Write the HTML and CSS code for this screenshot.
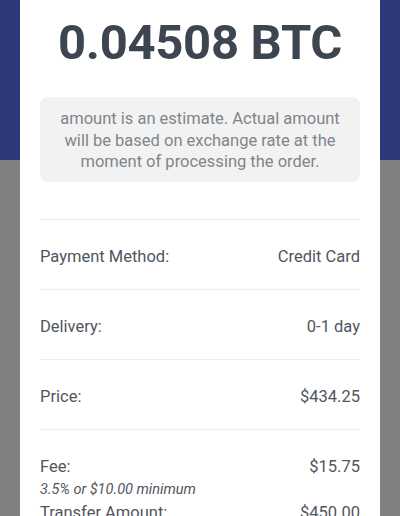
FILE: index.html
```html
<!DOCTYPE html>
<html lang="en">
<head>
<meta charset="utf-8">
<link rel="stylesheet" href="styles.css">
</head>
<body>
<div class="card">
  <h1 class="amount">0.04508 BTC</h1>
  <p class="notice">amount is an estimate. Actual amount will be based on exchange rate at the moment of processing the order.</p>
  <div class="details">
    <div class="row"><span class="label">Payment Method:</span><span class="value">Credit Card</span></div>
    <div class="row"><span class="label">Delivery:</span><span class="value">0-1 day</span></div>
    <div class="row"><span class="label">Price:</span><span class="value">$434.25</span></div>
    <div class="row row-fee">
      <div class="line"><span class="label">Fee:</span><span class="value">$15.75</span></div>
      <div class="note">3.5% or $10.00 minimum</div>
      <div class="line"><span class="label">Transfer Amount:</span><span class="value">$450.00</span></div>
    </div>
  </div>
</div>
</body>
</html>
```
FILE: styles.css
```css
html, body {
  margin: 0;
  height: 100%;
}
body {
  background: linear-gradient(#2d3977 0, #2d3977 160px, #808080 160px, #808080 100%);
  font-family: Roboto, "Liberation Sans", sans-serif;
  overflow: hidden;
}
.card {
  margin: 0 20px;
  background: #ffffff;
  padding: 13px 20px 0;
  min-height: 600px;
}
.amount {
  margin: 0;
  text-align: center;
  font-size: 49px;
  line-height: 60px;
  font-weight: 700;
  color: #3d4650;
  letter-spacing: -0.3px;
}
.notice {
  margin: 24px 0 37px;
  background: #f2f2f2;
  border-radius: 8px;
  padding: 11px 12px 9px;
  text-align: center;
  font-size: 16.5px;
  line-height: 21.5px;
  color: #80858b;
}
.details {
  border-top: 1px solid #eeeeee;
}
.row {
  border-bottom: 1px solid #eeeeee;
  display: flex;
  justify-content: space-between;
  padding: 26px 0 21px;
  font-size: 16.5px;
  line-height: 22px;
  color: #50565e;
}
.row-fee {
  display: block;
  border-bottom: none;
}
.line {
  display: flex;
  justify-content: space-between;
}
.note {
  font-style: italic;
  font-size: 14.5px;
  line-height: 24px;
  color: #50565e;
}
```
